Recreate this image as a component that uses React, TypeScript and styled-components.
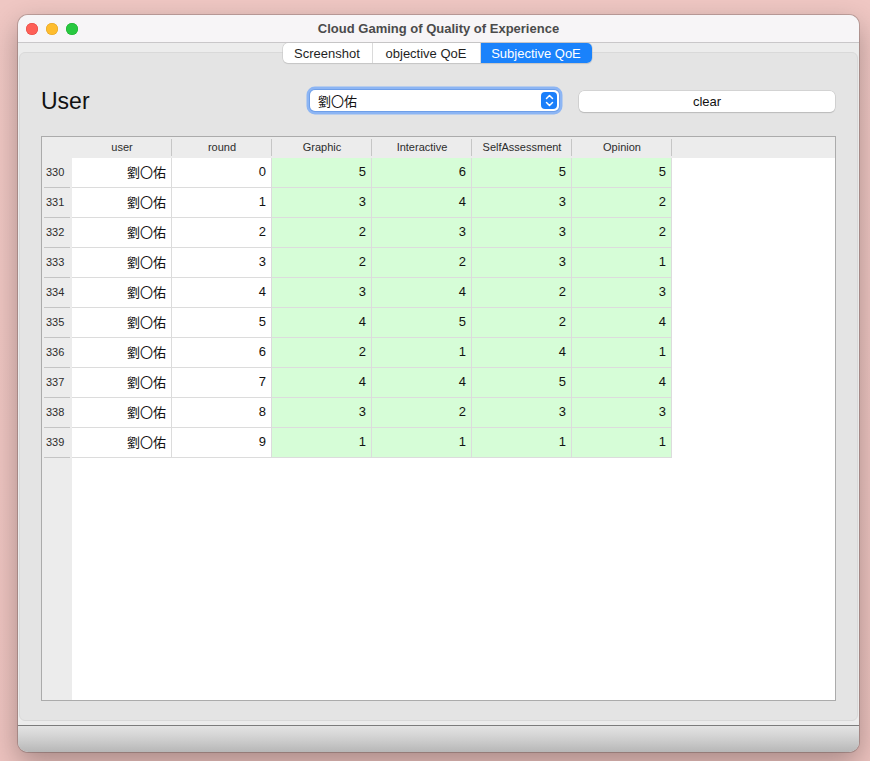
import styled, { createGlobalStyle } from 'styled-components';

const GlobalStyle = createGlobalStyle`
  html, body {
    margin: 0;
    padding: 0;
    height: 100%;
    background: #eec5c1;
    font-family: "Liberation Sans", "Noto Sans CJK TC", sans-serif;
    overflow: hidden;
  }
`;

const Page = styled.div`
  width: 870px;
  height: 761px;
  padding: 15px 0 0 18px;
  box-sizing: border-box;
  background: linear-gradient(180deg, #efc7c3 0%, #ecc2be 100%);
`;

const Window = styled.div`
  width: 841px;
  height: 737px;
  border-radius: 10px;
  overflow: hidden;
  display: flex;
  flex-direction: column;
  background: #ececec;
  box-shadow: 0 0 0 1px rgba(0, 0, 0, 0.18), 0 10px 28px rgba(0, 0, 0, 0.3);
`;

const TitleBar = styled.div`
  height: 27px;
  flex: none;
  display: flex;
  align-items: center;
  position: relative;
  background: #f7f5f7;
  border-bottom: 1px solid #c9c7c9;
  padding-left: 8px;
`;

const Light = styled.span<{ $color: string; $ring: string }>`
  width: 12px;
  height: 12px;
  border-radius: 50%;
  background: ${(p) => p.$color};
  box-shadow: inset 0 0 0 0.5px ${(p) => p.$ring};
  margin-right: 8px;
`;

const Title = styled.div`
  position: absolute;
  left: 0;
  right: 0;
  text-align: center;
  font-size: 13px;
  font-weight: bold;
  color: #4b4b4b;
  pointer-events: none;
`;

const Body = styled.div`
  flex: 1;
  display: flex;
  flex-direction: column;
  padding: 0 1px 4px 1px;
  min-height: 0;
`;

const Tabs = styled.div`
  align-self: center;
  display: flex;
  height: 20px;
  margin-right: 3px;
  position: relative;
  z-index: 1;
  background: #fff;
  border-radius: 5px;
  box-shadow: 0 0 0 0.5px #c4c4c4, 0 1px 1px rgba(0, 0, 0, 0.12);
  overflow: hidden;
`;

const Tab = styled.div<{ $width: number; $active?: boolean }>`
  width: ${(p) => p.$width}px;
  display: flex;
  align-items: center;
  justify-content: center;
  font-size: 13px;
  color: ${(p) => (p.$active ? '#fff' : '#1f1f1f')};
  background: ${(p) => (p.$active ? '#1a82fb' : 'transparent')};
  border-left: 1px solid #dadada;
  box-sizing: border-box;

  &:first-child {
    border-left: none;
  }
`;

const Panel = styled.div`
  flex: 1;
  margin-top: -11px;
  background: #e4e4e4;
  border: 1px solid #d9d9d9;
  border-radius: 6px;
  padding: 32px 21px 19px 21px;
  display: flex;
  flex-direction: column;
  min-height: 0;
`;

const Controls = styled.div`
  display: grid;
  grid-template-columns: 250px 255px 257px;
  column-gap: 16px;
  align-items: center;
  height: 27px;
`;

const UserLabel = styled.div`
  font-size: 23px;
  color: #111;
  padding-top: 3px;
`;

const Combo = styled.div`
  margin: 3px;
  height: 21px;
  background: #fff;
  border-radius: 5px;
  box-shadow: 0 0 0 1px #6f9fe8, 0 0 0 3.5px #8cb5f4;
  display: flex;
  align-items: center;
  justify-content: space-between;
  padding: 0 2px 0 8px;
  font-size: 13px;
  color: #111;
`;

const Stepper = styled.div`
  width: 16px;
  height: 17px;
  border-radius: 4px;
  background: #1b7ffa;
  display: flex;
  align-items: center;
  justify-content: center;
`;

const ClearButton = styled.button`
  height: 21px;
  margin: 2px 0 0 1px;
  border: none;
  border-radius: 5px;
  background: #fff;
  box-shadow: 0 0 0 0.5px #c2c2c2, 0 1px 1px rgba(0, 0, 0, 0.2);
  font-family: inherit;
  font-size: 13px;
  color: #111;
  padding: 0;
`;

const Table = styled.div`
  margin-top: 24px;
  flex: 1;
  border: 1px solid #ababab;
  background: #fff;
  display: flex;
  flex-direction: column;
  min-height: 0;
`;

const HeaderRow = styled.div`
  display: flex;
  height: 21px;
  flex: none;
  background: #ececec;
`;

const Corner = styled.div`
  width: 30px;
  flex: none;
`;

const HeadCell = styled.div`
  width: 100px;
  flex: none;
  display: flex;
  align-items: center;
  justify-content: center;
  padding-bottom: 1px;
  box-sizing: border-box;
  font-size: 11px;
  color: #2c2c2c;
  position: relative;

  &::after {
    content: '';
    position: absolute;
    right: 0;
    top: 2px;
    bottom: 2px;
    width: 1px;
    background: #c6c6c6;
  }
`;

const Rows = styled.div`
  flex: 1;
  display: flex;
  flex-direction: column;
  background: linear-gradient(90deg, #ececec 0, #ececec 30px, #fff 30px);
`;

const Row = styled.div`
  display: flex;
  height: 30px;
  flex: none;
`;

const RowHead = styled.div`
  width: 30px;
  flex: none;
  box-sizing: border-box;
  display: flex;
  align-items: center;
  padding: 0 0 2px 4px;
  font-size: 11px;
  color: #2c2c2c;
  background: #ececec;
  position: relative;

  &::after {
    content: '';
    position: absolute;
    left: 2px;
    right: 2px;
    bottom: 0;
    height: 1px;
    background: #c4c4c4;
  }
`;

const Cell = styled.div<{ $green?: boolean }>`
  width: 100px;
  flex: none;
  box-sizing: border-box;
  display: flex;
  align-items: center;
  justify-content: flex-end;
  padding: 0 5px 2px 0;
  font-size: 13px;
  color: #111;
  background: ${(p) => (p.$green ? '#d6fdd7' : '#fff')};
  border-right: 1px solid #dcdcdc;
  border-bottom: 1px solid #dcdcdc;
`;

const StatusBar = styled.div`
  height: 27px;
  flex: none;
  border-top: 1px solid #7c7c7c;
  box-sizing: border-box;
  background: linear-gradient(180deg, #e4e4e4 0%, #cfcfcf 50%, #b7b7b7 100%);
`;

const columns = ['user', 'round', 'Graphic', 'Interactive', 'SelfAssessment', 'Opinion'];

const scores: number[][] = [
  [5, 6, 5, 5],
  [3, 4, 3, 2],
  [2, 3, 3, 2],
  [2, 2, 3, 1],
  [3, 4, 2, 3],
  [4, 5, 2, 4],
  [2, 1, 4, 1],
  [4, 4, 5, 4],
  [3, 2, 3, 3],
  [1, 1, 1, 1],
];

const userName = '劉〇佑';

function App() {
  return (
    <>
      <GlobalStyle />
      <Page>
        <Window>
          <TitleBar>
            <Light $color="#fe5f57" $ring="#e0443e" />
            <Light $color="#febc2e" $ring="#dea123" />
            <Light $color="#28c840" $ring="#1aab29" />
            <Title>Cloud Gaming of Quality of Experience</Title>
          </TitleBar>
          <Body>
            <Tabs>
              <Tab $width={89}>Screenshot</Tab>
              <Tab $width={108}>objective QoE</Tab>
              <Tab $width={112} $active>
                Subjective QoE
              </Tab>
            </Tabs>
            <Panel>
              <Controls>
                <UserLabel>User</UserLabel>
                <Combo>
                  <span>{userName}</span>
                  <Stepper>
                    <svg width="9" height="13" viewBox="0 0 9 13" fill="none">
                      <path
                        d="M1.5 4.5 L4.5 1.5 L7.5 4.5 M1.5 8.5 L4.5 11.5 L7.5 8.5"
                        stroke="#fff"
                        strokeWidth="1.5"
                        strokeLinecap="round"
                        strokeLinejoin="round"
                      />
                    </svg>
                  </Stepper>
                </Combo>
                <ClearButton>clear</ClearButton>
              </Controls>
              <Table>
                <HeaderRow>
                  <Corner />
                  {columns.map((c) => (
                    <HeadCell key={c}>{c}</HeadCell>
                  ))}
                </HeaderRow>
                <Rows>
                  {scores.map((s, i) => (
                    <Row key={i}>
                      <RowHead>{330 + i}</RowHead>
                      <Cell>{userName}</Cell>
                      <Cell>{i}</Cell>
                      {s.map((v, j) => (
                        <Cell key={j} $green>
                          {v}
                        </Cell>
                      ))}
                    </Row>
                  ))}
                </Rows>
              </Table>
            </Panel>
          </Body>
          <StatusBar />
        </Window>
      </Page>
    </>
  );
}

export default App;
